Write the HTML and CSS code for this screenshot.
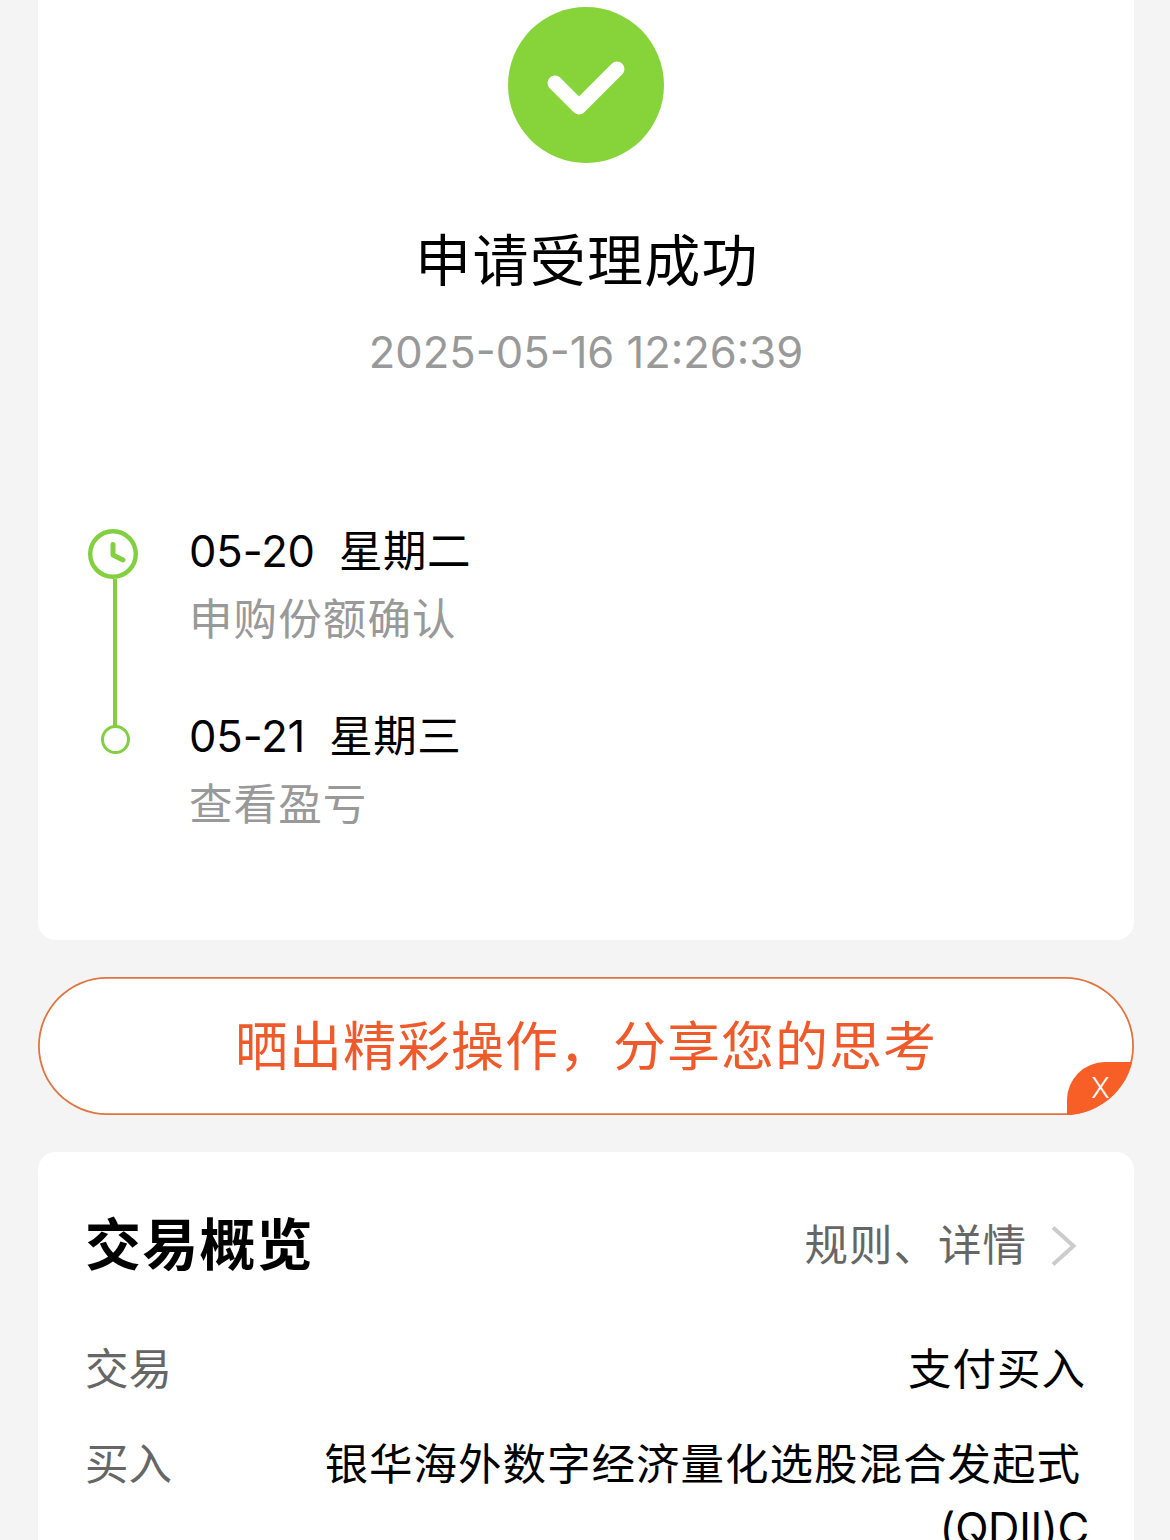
FILE: index.html
```
<!DOCTYPE html>
<html lang="zh-CN">
<head>
    <meta charset="UTF-8">
    <meta name="viewport" content="width=device-width, initial-scale=1.0">
    <title>申请受理成功</title>
    <link rel="stylesheet" href="styles.css">
</head>
<body>
    <div class="page">
        <div class="card result">
            <svg class="success-icon" viewBox="0 0 156 156">
                <circle cx="78" cy="78" r="78" fill="#87d43a"/>
                <path d="M47 76L71 100L109 62" fill="none" stroke="#fff" stroke-width="15" stroke-linecap="round" stroke-linejoin="round"/>
            </svg>
            <h1>申请受理成功</h1>
            <p class="time">2025-05-16 12:26:39</p>

            <div class="timeline">
                <div class="track">
                    <svg class="clock" viewBox="0 0 50 50">
                        <circle cx="25" cy="25" r="22.800" fill="#fff" stroke="#82cf40" stroke-width="4.400"/>
                        <path d="M25 15.500V26L35 31" fill="none" stroke="#82cf40" stroke-width="5" stroke-linecap="round" stroke-linejoin="round"/>
                    </svg>
                    <div class="line"></div>
                    <div class="dot"></div>
                </div>
                <ul class="steps">
                    <li>
                        <div class="date"><span>05-20</span><span class="week">星期二</span></div>
                        <div class="desc">申购份额确认</div>
                    </li>
                    <li>
                        <div class="date"><span>05-21</span><span class="week">星期三</span></div>
                        <div class="desc">查看盈亏</div>
                    </li>
                </ul>
            </div>
        </div>

        <div class="share">
            <span class="share-text">晒出精彩操作，分享您的思考</span>
            <span class="share-close">X</span>
        </div>

        <div class="card overview">
            <div class="overview-head">
                <h2>交易概览</h2>
                <a class="more">
                    <span>规则、详情</span>
                    <svg class="arrow" viewBox="0 0 26 42">
                        <path d="M2 2.500L22.500 21L2 39.500" fill="none" stroke="#ccc" stroke-width="4"/>
                    </svg>
                </a>
            </div>
            <div class="row">
                <span class="label">交易</span>
                <span class="value">支付买入</span>
            </div>
            <div class="row">
                <span class="label">买入</span>
                <div class="value">
                    <div class="fund-name">银华海外数字经济量化选股混合发起式</div>
                    <div class="fund-code">(QDII)C</div>
                </div>
            </div>
        </div>
    </div>
</body>
</html>
```
FILE: styles.css
```
* {
    box-sizing: border-box;
}

html {
    overflow: hidden;
}

body {
    margin: 0;
    background-color: #f4f4f4;
    color: #000;
    font-family: Inter, "Noto Sans CJK SC", sans-serif;
    font-size: 43.5px;
    line-height: 64px;
}

h1, h2, p, ul {
    margin: 0;
    padding: 0;
    font-weight: 400;
}

.page {
    height: 1540px;
    padding: 0 36px 0 38px;
    overflow: hidden;
}

.card {
    background-color: #fff;
}

.result {
    height: 940px;
    padding: 7px 50px 0;
    border-radius: 0 0 18px 18px;
    text-align: center;
}

.success-icon {
    display: block;
    width: 156px;
    height: 156px;
    margin: 0 auto;
}

h1 {
    margin-top: 58px;
    padding-left: 2px;
    font-size: 56px;
    line-height: 80px;
    letter-spacing: 1.3px;
}

.time {
    margin-top: 19px;
    color: #999;
}

.timeline {
    display: flex;
    margin-top: 135px;
    text-align: left;
}

.track {
    display: flex;
    flex-direction: column;
    align-items: center;
    width: 54px;
    padding-top: 10px;
}

.clock {
    width: 50px;
    height: 50px;
    margin-right: 4px;
}

.line {
    width: 4px;
    height: 147px;
    background-color: #82cf40;
}

.dot {
    width: 29px;
    height: 29px;
    margin-top: -1px;
    border: 3px solid #82cf40;
    border-radius: 50%;
}

.steps {
    margin-left: 47px;
    list-style: none;
}

.steps li {
    height: 185px;
}

.date {
    display: flex;
    gap: 24px;
    letter-spacing: -0.1px;
}

.week {
    letter-spacing: 0.6px;
}

.desc {
    margin-top: 4px;
    color: #999;
    letter-spacing: 1.1px;
}

.share {
    position: relative;
    height: 138px;
    margin: 37px 0;
    border-radius: 69px;
    background-color: #fff;
    box-shadow: inset 0 0 0 1.8px #e0743f;
    color: #ee5a2a;
    font-size: 53px;
    line-height: 141px;
    letter-spacing: 1px;
    text-align: center;
    overflow: hidden;
}

.share-close {
    position: absolute;
    right: 0;
    bottom: 0;
    width: 67px;
    height: 53px;
    border-top-left-radius: 38px;
    background-color: #f75f26;
    color: #fff;
    font-size: 28px;
    font-weight: 300;
    line-height: 53px;
    letter-spacing: 0;
}

.overview {
    height: 500px;
    padding: 53px 48px 0 47px;
    border-radius: 18px;
}

.overview-head {
    display: flex;
    justify-content: space-between;
    align-items: center;
    height: 80px;
    margin-bottom: 52px;
}

h2 {
    font-size: 56px;
    font-weight: 700;
    letter-spacing: 1.2px;
}

.more {
    display: flex;
    align-items: center;
    color: #666;
    letter-spacing: 1px;
}

.arrow {
    width: 26px;
    height: 42px;
    margin: 2px 9px 0 24px;
}

.row {
    display: flex;
    justify-content: space-between;
    margin-bottom: 31px;
}

.label {
    color: #666;
}

.value {
    text-align: right;
    letter-spacing: 1px;
}

.fund-name {
    padding-right: 5px;
}

.fund-code {
    margin-right: -3px;
    letter-spacing: -0.3px;
}
```
